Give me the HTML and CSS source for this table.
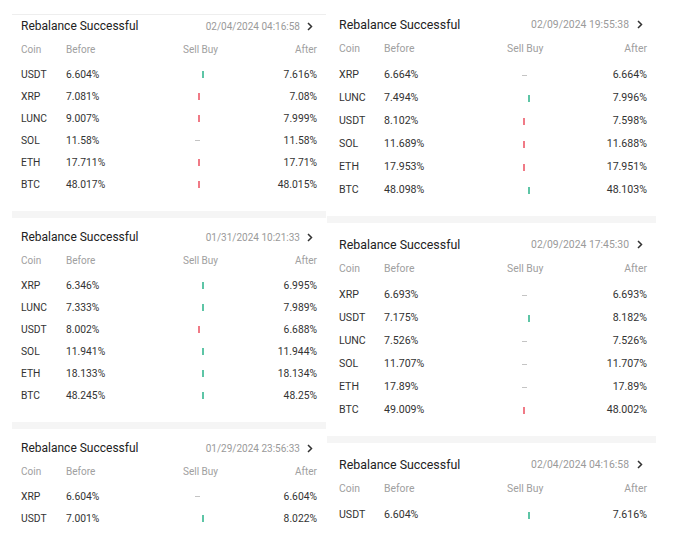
FILE: index.html
```html
<!DOCTYPE html>
<html>
<head>
<meta charset="utf-8">
<link rel="stylesheet" href="styles.css">
</head>
<body>
<div class="page">
  <div class="col col-left">
    <div class="top-line"></div>
    <section class="card card-first">
      <div class="title-row"><span class="title">Rebalance Successful</span><span class="date">02/04/2024 04:16:58<svg class="chev" viewBox="0 0 6 9"><polyline points="1,1 4.5,4.5 1,8"/></svg></span></div>
      <div class="grid head"><span>Coin</span><span>Before</span><span class="sb">Sell Buy</span><span class="after">After</span></div>
      <div class="grid row"><span>USDT</span><span>6.604%</span><span class="ind"><i class="buy"></i></span><span class="after">7.616%</span></div>
      <div class="grid row"><span>XRP</span><span>7.081%</span><span class="ind"><i class="sell"></i></span><span class="after">7.08%</span></div>
      <div class="grid row"><span>LUNC</span><span>9.007%</span><span class="ind"><i class="sell"></i></span><span class="after">7.999%</span></div>
      <div class="grid row"><span>SOL</span><span>11.58%</span><span class="ind"><i class="none"></i></span><span class="after">11.58%</span></div>
      <div class="grid row"><span>ETH</span><span>17.711%</span><span class="ind"><i class="sell"></i></span><span class="after">17.71%</span></div>
      <div class="grid row"><span>BTC</span><span>48.017%</span><span class="ind"><i class="sell"></i></span><span class="after">48.015%</span></div>
    </section>
    <div class="sep"></div>
    <section class="card">
      <div class="title-row"><span class="title">Rebalance Successful</span><span class="date">01/31/2024 10:21:33<svg class="chev" viewBox="0 0 6 9"><polyline points="1,1 4.5,4.5 1,8"/></svg></span></div>
      <div class="grid head"><span>Coin</span><span>Before</span><span class="sb">Sell Buy</span><span class="after">After</span></div>
      <div class="grid row"><span>XRP</span><span>6.346%</span><span class="ind"><i class="buy"></i></span><span class="after">6.995%</span></div>
      <div class="grid row"><span>LUNC</span><span>7.333%</span><span class="ind"><i class="buy"></i></span><span class="after">7.989%</span></div>
      <div class="grid row"><span>USDT</span><span>8.002%</span><span class="ind"><i class="sell"></i></span><span class="after">6.688%</span></div>
      <div class="grid row"><span>SOL</span><span>11.941%</span><span class="ind"><i class="buy"></i></span><span class="after">11.944%</span></div>
      <div class="grid row"><span>ETH</span><span>18.133%</span><span class="ind"><i class="buy"></i></span><span class="after">18.134%</span></div>
      <div class="grid row"><span>BTC</span><span>48.245%</span><span class="ind"><i class="buy"></i></span><span class="after">48.25%</span></div>
    </section>
    <div class="sep"></div>
    <section class="card">
      <div class="title-row"><span class="title">Rebalance Successful</span><span class="date">01/29/2024 23:56:33<svg class="chev" viewBox="0 0 6 9"><polyline points="1,1 4.5,4.5 1,8"/></svg></span></div>
      <div class="grid head"><span>Coin</span><span>Before</span><span class="sb">Sell Buy</span><span class="after">After</span></div>
      <div class="grid row"><span>XRP</span><span>6.604%</span><span class="ind"><i class="none"></i></span><span class="after">6.604%</span></div>
      <div class="grid row"><span>USDT</span><span>7.001%</span><span class="ind"><i class="buy"></i></span><span class="after">8.022%</span></div>
    </section>
  </div>

  <div class="col col-right">
    <section class="card card-first">
      <div class="title-row"><span class="title">Rebalance Successful</span><span class="date">02/09/2024 19:55:38<svg class="chev" viewBox="0 0 6 9"><polyline points="1,1 4.5,4.5 1,8"/></svg></span></div>
      <div class="grid head"><span>Coin</span><span>Before</span><span class="sb">Sell Buy</span><span class="after">After</span></div>
      <div class="grid row"><span>XRP</span><span>6.664%</span><span class="ind"><i class="none"></i></span><span class="after">6.664%</span></div>
      <div class="grid row"><span>LUNC</span><span>7.494%</span><span class="ind"><i class="buy"></i></span><span class="after">7.996%</span></div>
      <div class="grid row"><span>USDT</span><span>8.102%</span><span class="ind"><i class="sell"></i></span><span class="after">7.598%</span></div>
      <div class="grid row"><span>SOL</span><span>11.689%</span><span class="ind"><i class="sell"></i></span><span class="after">11.688%</span></div>
      <div class="grid row"><span>ETH</span><span>17.953%</span><span class="ind"><i class="sell"></i></span><span class="after">17.951%</span></div>
      <div class="grid row"><span>BTC</span><span>48.098%</span><span class="ind"><i class="buy"></i></span><span class="after">48.103%</span></div>
    </section>
    <div class="sep"></div>
    <section class="card">
      <div class="title-row"><span class="title">Rebalance Successful</span><span class="date">02/09/2024 17:45:30<svg class="chev" viewBox="0 0 6 9"><polyline points="1,1 4.5,4.5 1,8"/></svg></span></div>
      <div class="grid head"><span>Coin</span><span>Before</span><span class="sb">Sell Buy</span><span class="after">After</span></div>
      <div class="grid row"><span>XRP</span><span>6.693%</span><span class="ind"><i class="none"></i></span><span class="after">6.693%</span></div>
      <div class="grid row"><span>USDT</span><span>7.175%</span><span class="ind"><i class="buy"></i></span><span class="after">8.182%</span></div>
      <div class="grid row"><span>LUNC</span><span>7.526%</span><span class="ind"><i class="none"></i></span><span class="after">7.526%</span></div>
      <div class="grid row"><span>SOL</span><span>11.707%</span><span class="ind"><i class="none"></i></span><span class="after">11.707%</span></div>
      <div class="grid row"><span>ETH</span><span>17.89%</span><span class="ind"><i class="none"></i></span><span class="after">17.89%</span></div>
      <div class="grid row"><span>BTC</span><span>49.009%</span><span class="ind"><i class="sell"></i></span><span class="after">48.002%</span></div>
    </section>
    <div class="sep"></div>
    <section class="card">
      <div class="title-row"><span class="title">Rebalance Successful</span><span class="date">02/04/2024 04:16:58<svg class="chev" viewBox="0 0 6 9"><polyline points="1,1 4.5,4.5 1,8"/></svg></span></div>
      <div class="grid head"><span>Coin</span><span>Before</span><span class="sb">Sell Buy</span><span class="after">After</span></div>
      <div class="grid row"><span>USDT</span><span>6.604%</span><span class="ind"><i class="buy"></i></span><span class="after">7.616%</span></div>
    </section>
  </div>
</div>
</body>
</html>
```

FILE: styles.css
```css
* { box-sizing: border-box; }
html, body { margin: 0; padding: 0; background: #fff; }
body {
  font-family: Roboto, "Liberation Sans", sans-serif;
  color: #333;
  width: 700px;
  height: 540px;
  overflow: hidden;
}
.page {
  display: flex;
  align-items: flex-start;
}
.col { display: flex; flex-direction: column; }
.col-left { margin-left: 12px; width: 314px; }
.col-right { margin-left: 1px; width: 329px; }

.top-line { margin-top: 14px; height: 1px; background: #eeeeee; }
.sep { height: 7px; background: #f5f5f5; }

.card { display: flex; flex-direction: column; }
.col-left .card { padding: 8px 9px 16px 9px; }
.col-left .card-first { padding-top: 0; }
.col-right .card { padding: 9px 9px 15px 12px; }
.col-right .card-first { padding-top: 12px; }

.title-row {
  display: flex;
  align-items: center;
  justify-content: space-between;
  height: 22px;
}
.col-right .title-row { height: 24px; }
.title { font-size: 12px; color: #222; }
.col-right .title { font-size: 12.4px; }
.date {
  display: flex;
  align-items: center;
  font-size: 10px;
  color: #9a9a9a;
  margin-right: 4px;
}
.col-right .date { font-size: 10.4px; }
.chev {
  width: 6px;
  height: 9px;
  margin-left: 7px;
  fill: none;
  stroke: #333;
  stroke-width: 1.5;
}
.col-right .chev { margin-left: 8px; }

.grid {
  display: grid;
  grid-template-columns: 45px 117px 36px 1fr;
  align-items: center;
}
.col-right .grid { grid-template-columns: 45px 123px 37px 1fr; }
.head { height: 24px; margin-bottom: 2px; font-size: 10px; color: #a0a0a0; }
.col-right .head { margin-bottom: 3px; font-size: 10.4px; }
.row { height: 22px; font-size: 10.3px; color: #333; }
.col-right .row { height: 23px; font-size: 10.6px; }
.sb { white-space: nowrap; }
.after { text-align: right; }

.ind { position: relative; height: 100%; }
.ind i { position: absolute; top: 50%; }
.ind .buy {
  left: 19px;
  width: 1.5px; height: 7px; margin-top: -3px;
  background: #5dc5a6;
}
.ind .sell {
  left: 15px;
  width: 1.5px; height: 7px; margin-top: -3px;
  background: #f07a86;
}
.ind .none {
  left: 12px;
  width: 5px; height: 1px;
  background: #c4c4c4;
}
.col-right .ind .buy { left: 21px; }
.col-right .ind .sell { left: 16px; }
.col-right .ind .none { left: 15px; }
```
